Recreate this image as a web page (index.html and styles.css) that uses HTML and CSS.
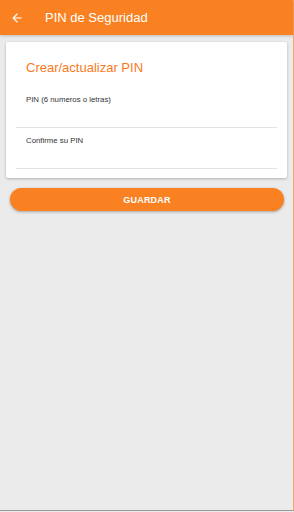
FILE: index.html
```html
<!DOCTYPE html>
<html>
<head>
  <title>PIN de Seguridad</title>
  <link rel="stylesheet" href="styles.css">
</head>
<body>
  <div class="app">
    <div class="toolbar">
      <svg class="back" width="14" height="14" viewBox="0 0 24 24">
        <path d="M20 11H7.83l5.59-5.59L12 4l-8 8 8 8 1.41-1.41L7.83 13H20v-2z" fill="#fff"/>
      </svg>
      <span class="title">PIN de Seguridad</span>
    </div>

    <div class="card">
      <h2 class="card-title">Crear/actualizar PIN</h2>
      <div class="field">
        <label>PIN (6 numeros o letras)</label>
      </div>
      <div class="field">
        <label>Confirme su PIN</label>
      </div>
    </div>

    <button class="save">GUARDAR</button>
  </div>
</body>
</html>
```

FILE: styles.css
```css
html, body {
  margin: 0;
  padding: 0;
  height: 100%;
}

body {
  background: #ebebeb;
  font-family: "Liberation Sans", Arial, sans-serif;
}

.app {
  height: 511px;
  border-right: 1px solid #f7a66b;
  box-sizing: border-box;
  border-bottom: 1px solid #9a9a9a;
}

/* top bar */
.toolbar {
  height: 35px;
  background: #f98122;
  display: flex;
  align-items: center;
  padding-left: 10px;
  box-shadow: 0 1px 3px rgba(0, 0, 0, 0.2);
}

.back {
  margin-right: 21px;
}

.title {
  color: #fff;
  font-size: 13px;
}

/* card with the two inputs */
.card {
  background: #fff;
  margin: 7px 6px 0 6px;
  border-radius: 2px;
  padding: 18px 10px 9px 10px;
  box-shadow: 0 1px 3px rgba(0, 0, 0, 0.25);
}

.card-title {
  margin: 0 0 0 10px;
  font-size: 13px;
  line-height: 15px;
  font-weight: 400;
  color: #f97a1c;
}

.field {
  border-bottom: 1px solid #e3e3e3;
  height: 41px;
  box-sizing: border-box;
}

.field:first-of-type {
  margin-top: 20px;
  height: 33px;
}

.field label {
  display: block;
  font-size: 7.8px;
  line-height: 9px;
  color: #333;
  padding-left: 10px;
}

.field + .field label {
  padding-top: 8px;
}

/* button */
.save {
  display: block;
  width: 274px;
  height: 23px;
  margin: 10px 0 0 10px;
  border: none;
  border-radius: 12px;
  background: #f98122;
  color: #fff;
  font-family: "Liberation Sans", Arial, sans-serif;
  font-size: 9px;
  font-weight: 700;
  letter-spacing: 0.2px;
  box-shadow: 0 1px 3px rgba(0, 0, 0, 0.3);
}
```
